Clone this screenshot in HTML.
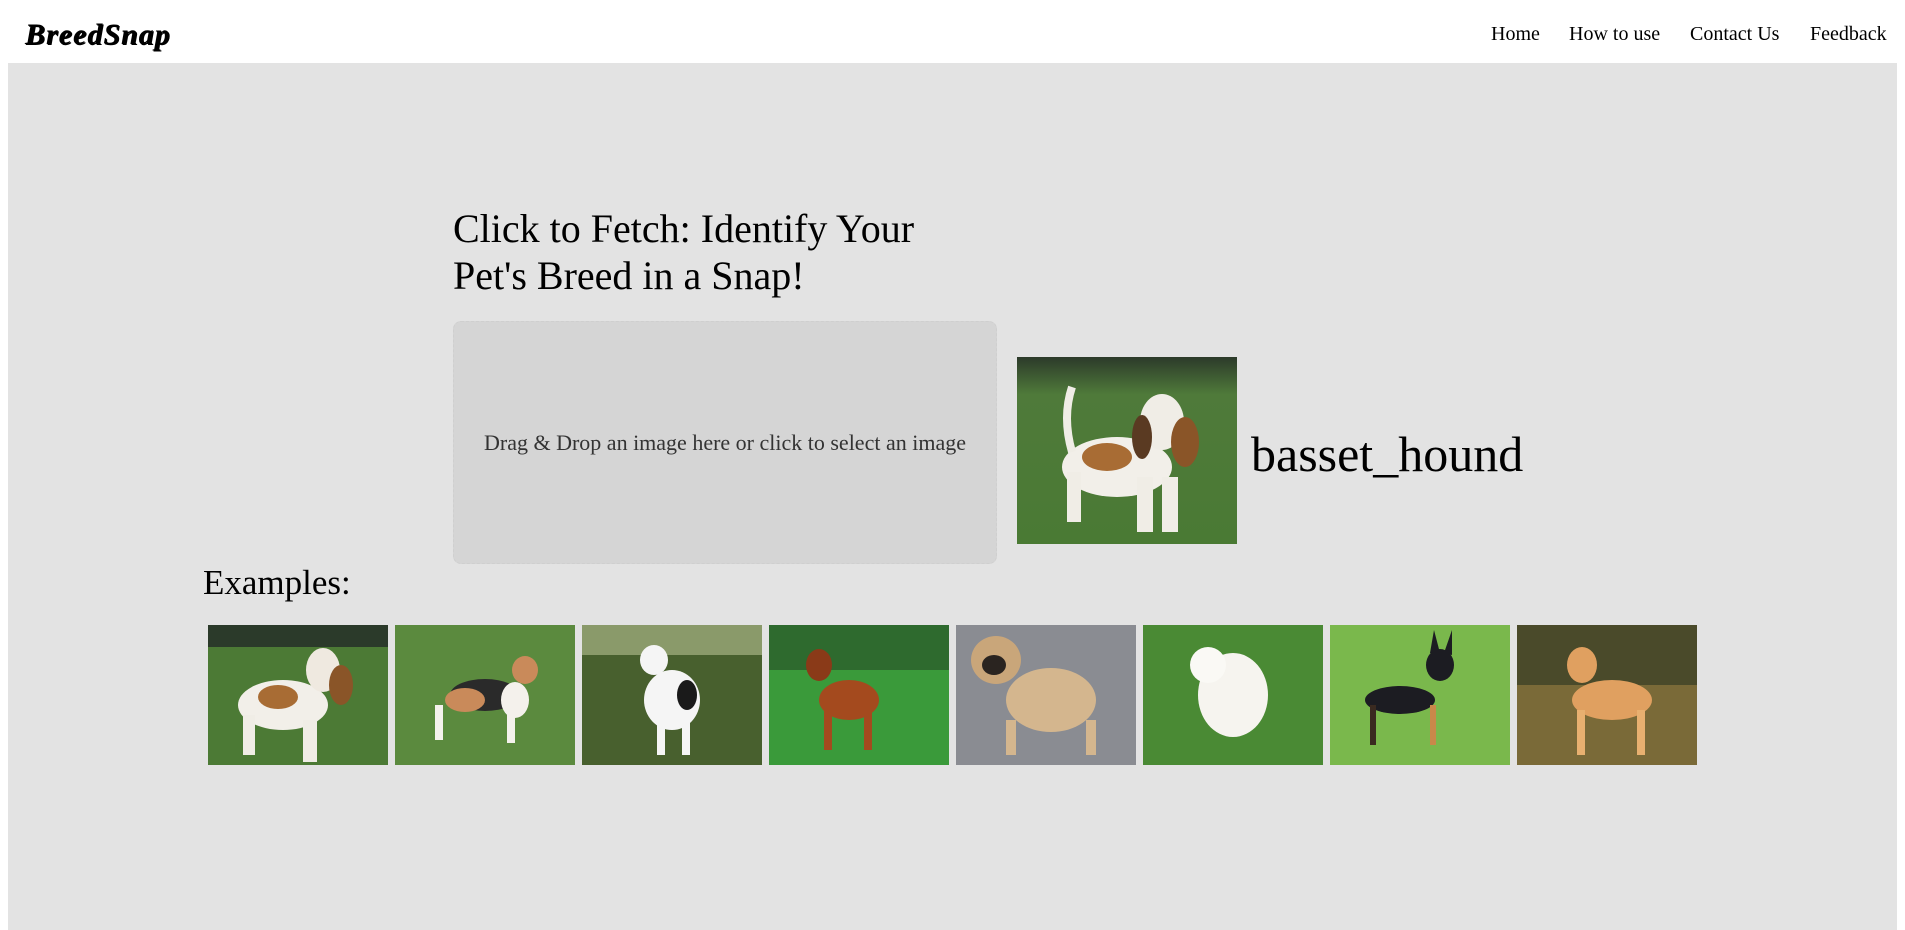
<!DOCTYPE html>
<html><head><meta charset="utf-8">
<style>
*{margin:0;padding:0;box-sizing:border-box}
html,body{width:1905px;height:930px;overflow:hidden;background:#fff;font-family:"Liberation Serif",serif;color:#000}
.logo{position:absolute;left:25px;top:18px;font-size:30px;font-weight:bold;font-style:italic;letter-spacing:1px;text-shadow:1px 1px 0 #000}
.nav{position:absolute;top:23px;font-size:20px}
.main{position:absolute;left:8px;top:63px;width:1889px;height:867px;background:#e3e3e3}
h1{position:absolute;left:453px;top:205px;font-size:40px;font-weight:normal;line-height:47px;width:540px}
.drop{position:absolute;left:453px;top:321px;width:544px;height:243px;background:#d5d5d5;border:1px dashed #cfcfcf;border-radius:8px;display:flex;align-items:center;justify-content:center;font-size:22px;color:#333}
.res{position:absolute;left:1017px;top:357px;width:220px;height:187px}
.label{position:absolute;left:1251px;top:424px;font-size:50px;line-height:60px}
.ex{position:absolute;left:203px;top:562px;font-size:35px;line-height:42px}
.th{position:absolute;top:625px;width:180px;height:140px;overflow:hidden}
</style></head><body>
<div class="logo">BreedSnap</div>
<div class="nav" style="left:1491px">Home</div>
<div class="nav" style="left:1569px">How to use</div>
<div class="nav" style="left:1690px">Contact Us</div>
<div class="nav" style="left:1810px">Feedback</div>
<div class="main"></div>
<h1>Click to Fetch: Identify Your Pet's Breed in a Snap!</h1>
<div class="drop">Drag &amp; Drop an image here or click to select an image</div>
<svg class="res" viewBox="0 0 220 187" preserveAspectRatio="none">
<defs><linearGradient id="g0" x1="0" y1="0" x2="0" y2="1"><stop offset="0" stop-color="#2c3a2a"/><stop offset="0.2" stop-color="#4f7a3a"/><stop offset="1" stop-color="#4a7a34"/></linearGradient></defs>
<rect width="220" height="187" fill="url(#g0)"/>
<ellipse cx="100" cy="110" rx="55" ry="30" fill="#f2efe9"/>
<ellipse cx="90" cy="100" rx="25" ry="14" fill="#a86c34"/>
<ellipse cx="145" cy="65" rx="22" ry="28" fill="#f0ede6"/>
<ellipse cx="168" cy="85" rx="14" ry="25" fill="#8a5528"/>
<ellipse cx="125" cy="80" rx="10" ry="22" fill="#5a3a22"/>
<rect x="50" y="115" width="14" height="50" fill="#f0ede6"/><rect x="120" y="120" width="16" height="55" fill="#f0ede6"/><rect x="145" y="120" width="16" height="55" fill="#f0ede6"/>
<path d="M55 95 Q45 60 55 30" stroke="#f0ede6" stroke-width="8" fill="none"/>
</svg>
<div class="label">basset_hound</div>
<div class="ex">Examples:</div>

<svg class="th" style="left:208px" viewBox="0 0 180 140"><rect width="180" height="140" fill="#4c7a35"/><rect width="180" height="22" fill="#2b3a2a"/><ellipse cx="75" cy="80" rx="45" ry="25" fill="#f2efe9"/><ellipse cx="70" cy="72" rx="20" ry="12" fill="#a86c34"/><ellipse cx="115" cy="45" rx="17" ry="22" fill="#efe9e0"/><ellipse cx="133" cy="60" rx="12" ry="20" fill="#8a5528"/><rect x="35" y="90" width="12" height="40" fill="#f0ede6"/><rect x="95" y="95" width="14" height="42" fill="#f0ede6"/></svg>
<svg class="th" style="left:395px" viewBox="0 0 180 140"><rect width="180" height="140" fill="#5b8a3e"/><ellipse cx="90" cy="70" rx="35" ry="16" fill="#2a2a2a"/><ellipse cx="70" cy="75" rx="20" ry="12" fill="#c98a5a"/><ellipse cx="120" cy="75" rx="14" ry="18" fill="#f4f1ec"/><ellipse cx="130" cy="45" rx="13" ry="14" fill="#c98a5a"/><rect x="40" y="80" width="8" height="35" fill="#f4f1ec"/><rect x="112" y="85" width="8" height="33" fill="#f4f1ec"/></svg>
<svg class="th" style="left:582px" viewBox="0 0 180 140"><rect width="180" height="140" fill="#48602e"/><rect width="180" height="30" fill="#8a9a6a"/><ellipse cx="90" cy="75" rx="28" ry="30" fill="#f5f5f5"/><ellipse cx="105" cy="70" rx="10" ry="15" fill="#1a1a1a"/><ellipse cx="72" cy="35" rx="14" ry="15" fill="#f5f5f5"/><rect x="75" y="95" width="8" height="35" fill="#f5f5f5"/><rect x="100" y="95" width="8" height="35" fill="#f5f5f5"/></svg>
<svg class="th" style="left:769px" viewBox="0 0 180 140"><rect width="180" height="140" fill="#3a9a3a"/><rect width="180" height="45" fill="#2e6a2e"/><ellipse cx="80" cy="75" rx="30" ry="20" fill="#a44a1e"/><ellipse cx="50" cy="40" rx="13" ry="16" fill="#8a3a18"/><rect x="55" y="85" width="8" height="40" fill="#a44a1e"/><rect x="95" y="85" width="8" height="40" fill="#a44a1e"/></svg>
<svg class="th" style="left:956px" viewBox="0 0 180 140"><rect width="180" height="140" fill="#8a8c92"/><ellipse cx="95" cy="75" rx="45" ry="32" fill="#d4b68e"/><ellipse cx="40" cy="35" rx="25" ry="24" fill="#c9a67a"/><ellipse cx="38" cy="40" rx="12" ry="10" fill="#2a2420"/><rect x="50" y="95" width="10" height="35" fill="#d4b68e"/><rect x="130" y="95" width="10" height="35" fill="#d4b68e"/></svg>
<svg class="th" style="left:1143px" viewBox="0 0 180 140"><rect width="180" height="140" fill="#4a8a34"/><ellipse cx="90" cy="70" rx="35" ry="42" fill="#f6f4ef"/><ellipse cx="65" cy="40" rx="18" ry="18" fill="#faf9f5"/></svg>
<svg class="th" style="left:1330px" viewBox="0 0 180 140"><rect width="180" height="140" fill="#7ab84c"/><ellipse cx="70" cy="75" rx="35" ry="14" fill="#1c1c22"/><ellipse cx="110" cy="40" rx="14" ry="16" fill="#1c1c22"/><path d="M100 28 L104 5 L110 28 Z M114 28 L122 5 L122 30 Z" fill="#1c1c22"/><rect x="40" y="80" width="6" height="40" fill="#3a2a20"/><rect x="100" y="80" width="6" height="40" fill="#c9884a"/></svg>
<svg class="th" style="left:1517px" viewBox="0 0 180 140"><rect width="180" height="140" fill="#7a6a38"/><rect width="180" height="60" fill="#4a4a2a"/><ellipse cx="95" cy="75" rx="40" ry="20" fill="#e0a060"/><ellipse cx="65" cy="40" rx="15" ry="18" fill="#e0a060"/><rect x="60" y="85" width="8" height="45" fill="#e8b070"/><rect x="120" y="85" width="8" height="45" fill="#e8b070"/></svg>
</body></html>
